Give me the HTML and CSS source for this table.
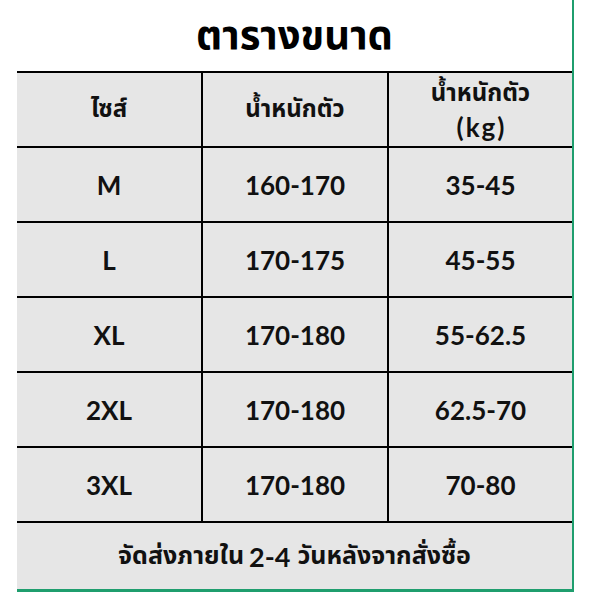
FILE: index.html
```html
<!DOCTYPE html>
<html lang="th">
<head>
<meta charset="utf-8">
<link rel="stylesheet" href="styles.css">
</head>
<body>
<div class="sheet">
  <h1 class="title">ตารางขนาด</h1>
  <div class="grid">
    <div class="cell head th">ไซส์</div>
    <div class="cell head th col">น้ำหนักตัว</div>
    <div class="cell head col"><span class="th">น้ำหนักตัว</span><span class="kg">(kg)</span></div>

    <div class="cell">M</div>
    <div class="cell col">160-170</div>
    <div class="cell col">35-45</div>

    <div class="cell">L</div>
    <div class="cell col">170-175</div>
    <div class="cell col">45-55</div>

    <div class="cell">XL</div>
    <div class="cell col">170-180</div>
    <div class="cell col">55-62.5</div>

    <div class="cell">2XL</div>
    <div class="cell col">170-180</div>
    <div class="cell col">62.5-70</div>

    <div class="cell">3XL</div>
    <div class="cell col">170-180</div>
    <div class="cell col">70-80</div>

    <div class="cell foot th">จัดส่งภายใน <span class="num">2-4</span> วันหลังจากสั่งซื้อ</div>
  </div>
</div>
</body>
</html>
```
FILE: styles.css
```css
html, body {
  margin: 0;
  padding: 0;
  background: #ffffff;
}
body {
  width: 592px;
  height: 592px;
  overflow: hidden;
  font-family: "Lato", "Noto Sans Thai", "Noto Sans", sans-serif;
  color: #111;
}
.sheet {
  margin-left: 17px;
  width: 555px;
  height: 589px;
  border-right: 2px solid #1f9e6e;
  border-bottom: 3px solid #1f9e6e;
  display: flex;
  flex-direction: column;
}
.title {
  margin: 0;
  height: 71px;
  padding-top: 3px;
  box-sizing: border-box;
  display: flex;
  align-items: center;
  justify-content: center;
  font-size: 40px;
  font-weight: 700;
  color: #000;
}
.th {
  font-family: "Noto Sans Thai", "Noto Sans", sans-serif;
}
.grid {
  display: grid;
  grid-template-columns: 184px 186px 185px;
  grid-template-rows: repeat(6, 75px) 68px;
  background: #e6e6e6;
}
.cell {
  border-top: 2px solid #000;
  display: flex;
  flex-direction: column;
  align-items: center;
  justify-content: center;
  font-size: 26px;
  font-weight: 700;
  box-sizing: border-box;
}
.col {
  border-left: 2px solid #000;
}
.head {
  font-size: 24px;
}
.head .kg {
  display: block;
  font-family: "Lato", sans-serif;
  font-size: 26px;
  letter-spacing: 2px;
  padding-left: 2px;
  line-height: 31px;
}
.head .th {
  display: block;
  line-height: 36px;
}
.foot {
  grid-column: 1 / 4;
  flex-direction: row;
  font-size: 25px;
}
.foot .num {
  font-family: "Lato", sans-serif;
  font-size: 27px;
  margin: 0 7px 0 5px;
}
```
